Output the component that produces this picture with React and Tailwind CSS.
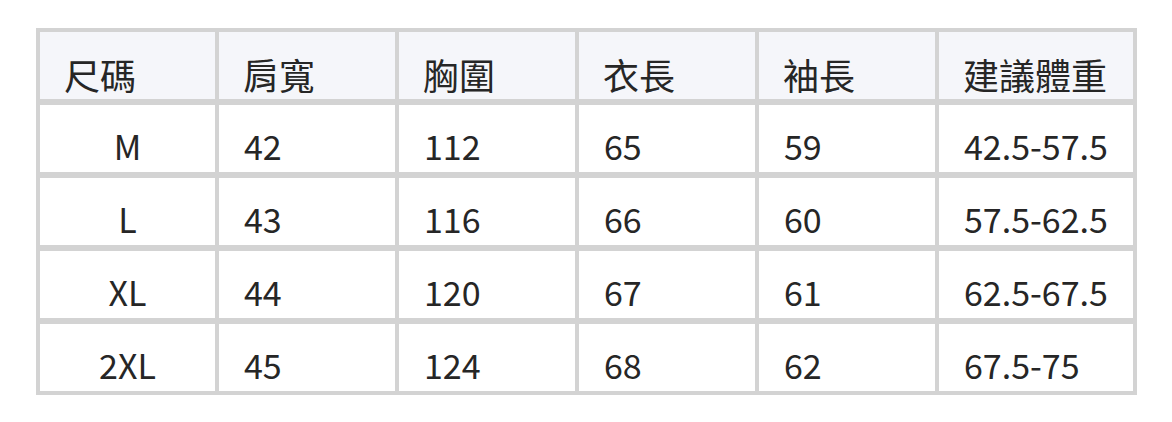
const headers = ["尺碼", "肩寬", "胸圍", "衣長", "袖長", "建議體重"];

const rows = [
  ["M", "42", "112", "65", "59", "42.5-57.5"],
  ["L", "43", "116", "66", "60", "57.5-62.5"],
  ["XL", "44", "120", "67", "61", "62.5-67.5"],
  ["2XL", "45", "124", "68", "62", "67.5-75"],
];

const font = { fontFamily: '"Noto Sans CJK TC", "Noto Sans", sans-serif' };

export default function App() {
  return (
    <div className="w-[1172px] h-[422px] bg-white pt-[28px] pl-[36px]" style={font}>
      <div className="inline-grid grid-cols-[175px_176px_176px_176px_176px_194px] gap-x-[4px] gap-y-[6px] bg-[#d3d3d3] p-[4px] text-[#262626] text-[34px] leading-none">
        {headers.map((h) => (
          <div key={h} className="h-[67px] bg-[#f5f6fa] flex items-end pl-[24px] pb-[7px] text-[36px]">
            {h}
          </div>
        ))}
        {rows.map((row) =>
          row.map((cell, i) => (
            <div
              key={row[0] + i}
              className={
                i === 0
                  ? "h-[67px] bg-white flex items-end justify-center pb-[9px]"
                  : "h-[67px] bg-white flex items-end pl-[25px] pb-[9px]"
              }
            >
              {cell}
            </div>
          ))
        )}
      </div>
    </div>
  );
}
